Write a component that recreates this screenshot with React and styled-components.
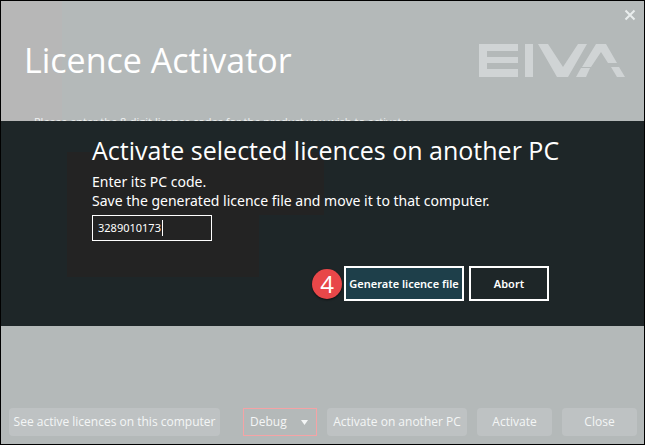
import React from 'react';
import styled, { createGlobalStyle } from 'styled-components';

const GlobalStyle = createGlobalStyle`
    * {
        box-sizing: border-box;
    }
    body {
        margin: 0;
        font-family: "Open Sans", "Noto Sans", sans-serif;
        color: #ffffff;
    }
`;

const Window = styled.main`
    display: flex;
    flex-direction: column;
    min-height: 100vh;
    border: 1px solid #000000;
    background: linear-gradient(#b7b7b7, #b7b7b7) 0 0 / 61px 120px no-repeat, #b4b9b9;
`;

const Header = styled.header`
    position: relative;
    display: flex;
    justify-content: space-between;
    height: 120px;
    padding: 0 19px 0 23px;
    overflow: hidden;
`;

const Title = styled.h1`
    margin: 35px 0 0;
    font-size: 34px;
    font-weight: 400;
    line-height: 48px;
    white-space: nowrap;
`;

const Intro = styled.p`
    margin: 30px 0 0 10px;
    font-size: 11px;
    line-height: 16px;
    white-space: nowrap;
    color: #f0f2f2;
`;

const Logo = styled.svg`
    flex: none;
    width: 146px;
    height: 33px;
    margin-top: 43px;
    fill: #d0d4d5;
`;

const CloseIcon = styled.button`
    position: absolute;
    top: 8px;
    right: 8px;
    display: flex;
    padding: 0;
    border: 0;
    background: none;
`;

const Dialog = styled.section`
    height: 205px;
    padding: 12px 95px 0 91px;
    background:
        linear-gradient(#232323, #232323) 66px 31px / 257px 63px no-repeat,
        linear-gradient(#232323, #232323) 66px 94px / 192px 62px no-repeat,
        #1e2628;
`;

const DialogTitle = styled.h2`
    margin: 0;
    font-size: 25px;
    font-weight: 400;
    line-height: 34px;
    white-space: nowrap;
`;

const DialogText = styled.label`
    display: block;
    margin-top: 5px;
    font-family: "Noto Sans", sans-serif;
    font-size: 14px;
    line-height: 19px;
    white-space: nowrap;
`;

const CodeField = styled.div`
    display: flex;
    align-items: center;
    width: 120px;
    height: 26px;
    margin-top: 5px;
    padding: 0 5px;
    border: 1px solid #ffffff;
`;

const CodeInput = styled.input`
    width: 65px;
    padding: 0;
    border: 0;
    border-right: 1px solid #ffffff;
    outline: 0;
    background: none;
    color: inherit;
    font: 11px/16px "Noto Sans", sans-serif;
`;

const Actions = styled.div`
    display: flex;
    justify-content: flex-end;
    align-items: center;
    margin-top: 25px;
`;

const Step = styled.span`
    width: 30px;
    height: 30px;
    margin-right: 2px;
    border-radius: 50%;
    background: #e84749;
    box-shadow: 0 1px 2px rgba(0, 0, 0, 0.6);
    font-size: 24px;
    line-height: 29px;
    text-align: center;
`;

const ActionButton = styled.button`
    width: ${props => props.$wide ? '120px' : '80px'};
    height: 35px;
    padding: 0;
    border: 2px solid #ffffff;
    background: ${props => props.$wide ? '#1e3f4a' : 'transparent'};
    color: #ffffff;
    font: 600 11px/16px "Noto Sans", sans-serif;
    white-space: nowrap;

    & + & {
        margin-left: 5px;
    }
`;

const Footer = styled.footer`
    display: flex;
    align-items: flex-end;
    gap: 10px;
    margin-top: auto;
    padding: 0 7px 8px 8px;
`;

const FooterButton = styled.button`
    width: ${props => props.$width};
    height: 28px;
    margin-right: ${props => props.$first ? 'auto' : '0'};
    padding: 0;
    border: 0;
    border-radius: 4px;
    background: #bec2c3;
    color: #f4f6f6;
    font: 12px/18px "Open Sans", sans-serif;
    white-space: nowrap;
`;

const SelectBox = styled.div`
    position: relative;
    width: 74px;
    height: 28px;
    border: 1px solid #f5a3a5;
`;

const Select = styled.select`
    appearance: none;
    width: 100%;
    height: 100%;
    padding: 0 6px;
    border: 0;
    background: none;
    color: #f4f6f6;
    font: 12px/18px "Open Sans", sans-serif;
`;

const Arrow = styled.svg`
    position: absolute;
    top: 11px;
    right: 8px;
    fill: #f4f6f6;
    pointer-events: none;
`;

const App = function(){

    return(
        <>
            <GlobalStyle />
            <Window>
                <Header>
                    <div>
                        <Title>Licence Activator</Title>
                        <Intro>Please enter the 8-digit licence codes for the product you wish to activate:</Intro>
                    </div>
                    <Logo viewBox="0 0 146 33" role="img" aria-label="EIVA">
                        <path d="M0 0H39V7H8V13H39V19H8V25H39V33H0Z" />
                        <path d="M46 0H54V33H46Z" />
                        <path d="M59 0H69L84 23L99 0H108L89 33H78Z" />
                        <path d="M117 0H127L138 19H129L122 8L112 23H103Z" />
                        <path d="M102 24H111L107 33H97Z" />
                        <path d="M132 23H140L146 33H138Z" />
                    </Logo>
                    <CloseIcon aria-label="Close window">
                        <svg width="12" height="12" viewBox="0 0 12 12" stroke="#e9eded" strokeWidth="2">
                            <path d="M1.5 1.5L10.5 10.5M10.5 1.5L1.5 10.5" />
                        </svg>
                    </CloseIcon>
                </Header>
                <Dialog>
                    <DialogTitle>Activate selected licences on another PC</DialogTitle>
                    <DialogText htmlFor="pc-code">
                        Enter its PC code.<br />
                        Save the generated licence file and move it to that computer.
                    </DialogText>
                    <CodeField>
                        <CodeInput id="pc-code" defaultValue="3289010173" />
                    </CodeField>
                    <Actions>
                        <Step>4</Step>
                        <ActionButton $wide>Generate licence file</ActionButton>
                        <ActionButton>Abort</ActionButton>
                    </Actions>
                </Dialog>
                <Footer>
                    <FooterButton $width="211px" $first>See active licences on this computer</FooterButton>
                    <SelectBox>
                        <Select aria-label="Configuration" defaultValue="Debug">
                            <option>Debug</option>
                        </Select>
                        <Arrow width="7" height="5" viewBox="0 0 7 5">
                            <path d="M0 0H7L3.5 5Z" />
                        </Arrow>
                    </SelectBox>
                    <FooterButton $width="140px">Activate on another PC</FooterButton>
                    <FooterButton $width="75px">Activate</FooterButton>
                    <FooterButton $width="75px">Close</FooterButton>
                </Footer>
            </Window>
        </>
    );
};
export default App;
